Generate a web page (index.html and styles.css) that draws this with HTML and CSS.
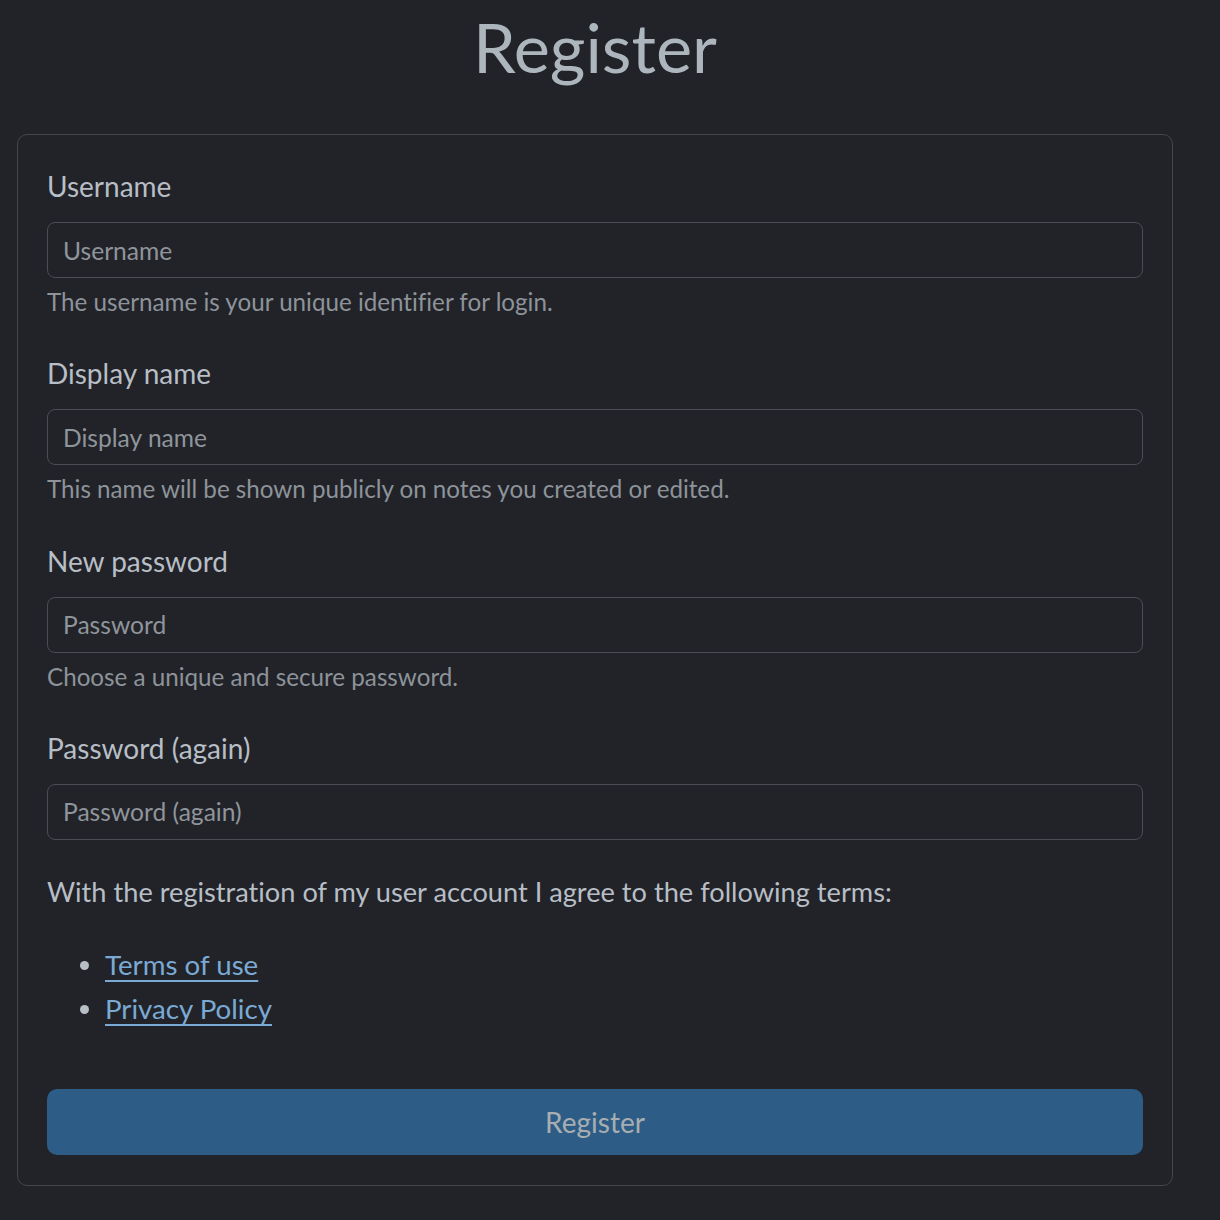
FILE: index.html
```html
<!DOCTYPE html>
<html lang="en">
<head>
<meta charset="utf-8">
<title>Register</title>
<link rel="stylesheet" href="styles.css">
</head>
<body>
<main class="page">
  <h1 class="title">Register</h1>
  <form class="card">
    <div class="group">
      <label class="label" for="u">Username</label>
      <input class="input" id="u" type="text" placeholder="Username">
      <div class="help">The username is your unique identifier for login.</div>
    </div>
    <div class="group">
      <label class="label" for="d">Display name</label>
      <input class="input" id="d" type="text" placeholder="Display name">
      <div class="help">This name will be shown publicly on notes you created or edited.</div>
    </div>
    <div class="group">
      <label class="label" for="p">New password</label>
      <input class="input" id="p" type="password" placeholder="Password">
      <div class="help">Choose a unique and secure password.</div>
    </div>
    <div class="group">
      <label class="label" for="p2">Password (again)</label>
      <input class="input" id="p2" type="password" placeholder="Password (again)">
    </div>
    <p class="terms">With the registration of my user account I agree to the following terms:</p>
    <ul class="links">
      <li><a href="#">Terms of use</a></li>
      <li><a href="#">Privacy Policy</a></li>
    </ul>
    <button class="btn" type="button">Register</button>
  </form>
</main>
</body>
</html>
```

FILE: styles.css
```css
html, body {
  margin: 0;
  padding: 0;
  background: #212329;
}
body {
  font-family: "Lato", "Open Sans", sans-serif;
  font-variant-ligatures: none;
  color: #b8bec5;
  font-size: 27.5px;
}
.page {
  margin-left: 17px;
  width: 1156px;
}
.title {
  margin: 0;
  height: 134px;
  box-sizing: border-box;
  padding-top: 5px;
  text-align: center;
  font-weight: 400;
  font-size: 68.5px;
  line-height: 84px;
  color: #adb5bd;
}
.card {
  border: 1px solid #43464b;
  border-radius: 10px;
  padding: 31px 29px 30px;
  display: flex;
  flex-direction: column;
}
.group {
  display: flex;
  flex-direction: column;
  margin-bottom: 31.3px;
}
.group:last-of-type {
  margin-bottom: 32.3px;
}
.label {
  line-height: 40px;
  margin-bottom: 16px;
  font-size: 28px;
  color: #b8bec5;
}
.input {
  height: 56px;
  box-sizing: border-box;
  border: 1px solid #4a4d53;
  border-radius: 8px;
  background: #212329;
  padding: 0 15px;
  font-family: inherit;
  font-size: 24.6px;
  color: #b8bec5;
  outline: none;
}
.input::placeholder {
  color: #8f959b;
}
.help {
  margin-top: 4px;
  line-height: 40px;
  color: #8d9399;
  font-size: 24.2px;
}
.terms {
  margin: 0;
  line-height: 40px;
  font-size: 27.2px;
  color: #b8bec5;
}
.links {
  margin: 31px 0 58px;
  padding-left: 58px;
  color: #b8bec5;
}
.links li {
  line-height: 44px;
  font-size: 27.7px;
}
.links a {
  color: #7aaad4;
  text-decoration: underline;
  text-underline-offset: 5px;
  text-decoration-thickness: 2px;
}
.btn {
  height: 66px;
  border: none;
  border-radius: 10px;
  background: #2d5d86;
  color: #a8adb1;
  font-family: inherit;
  font-size: 28px;
  cursor: pointer;
}
```
